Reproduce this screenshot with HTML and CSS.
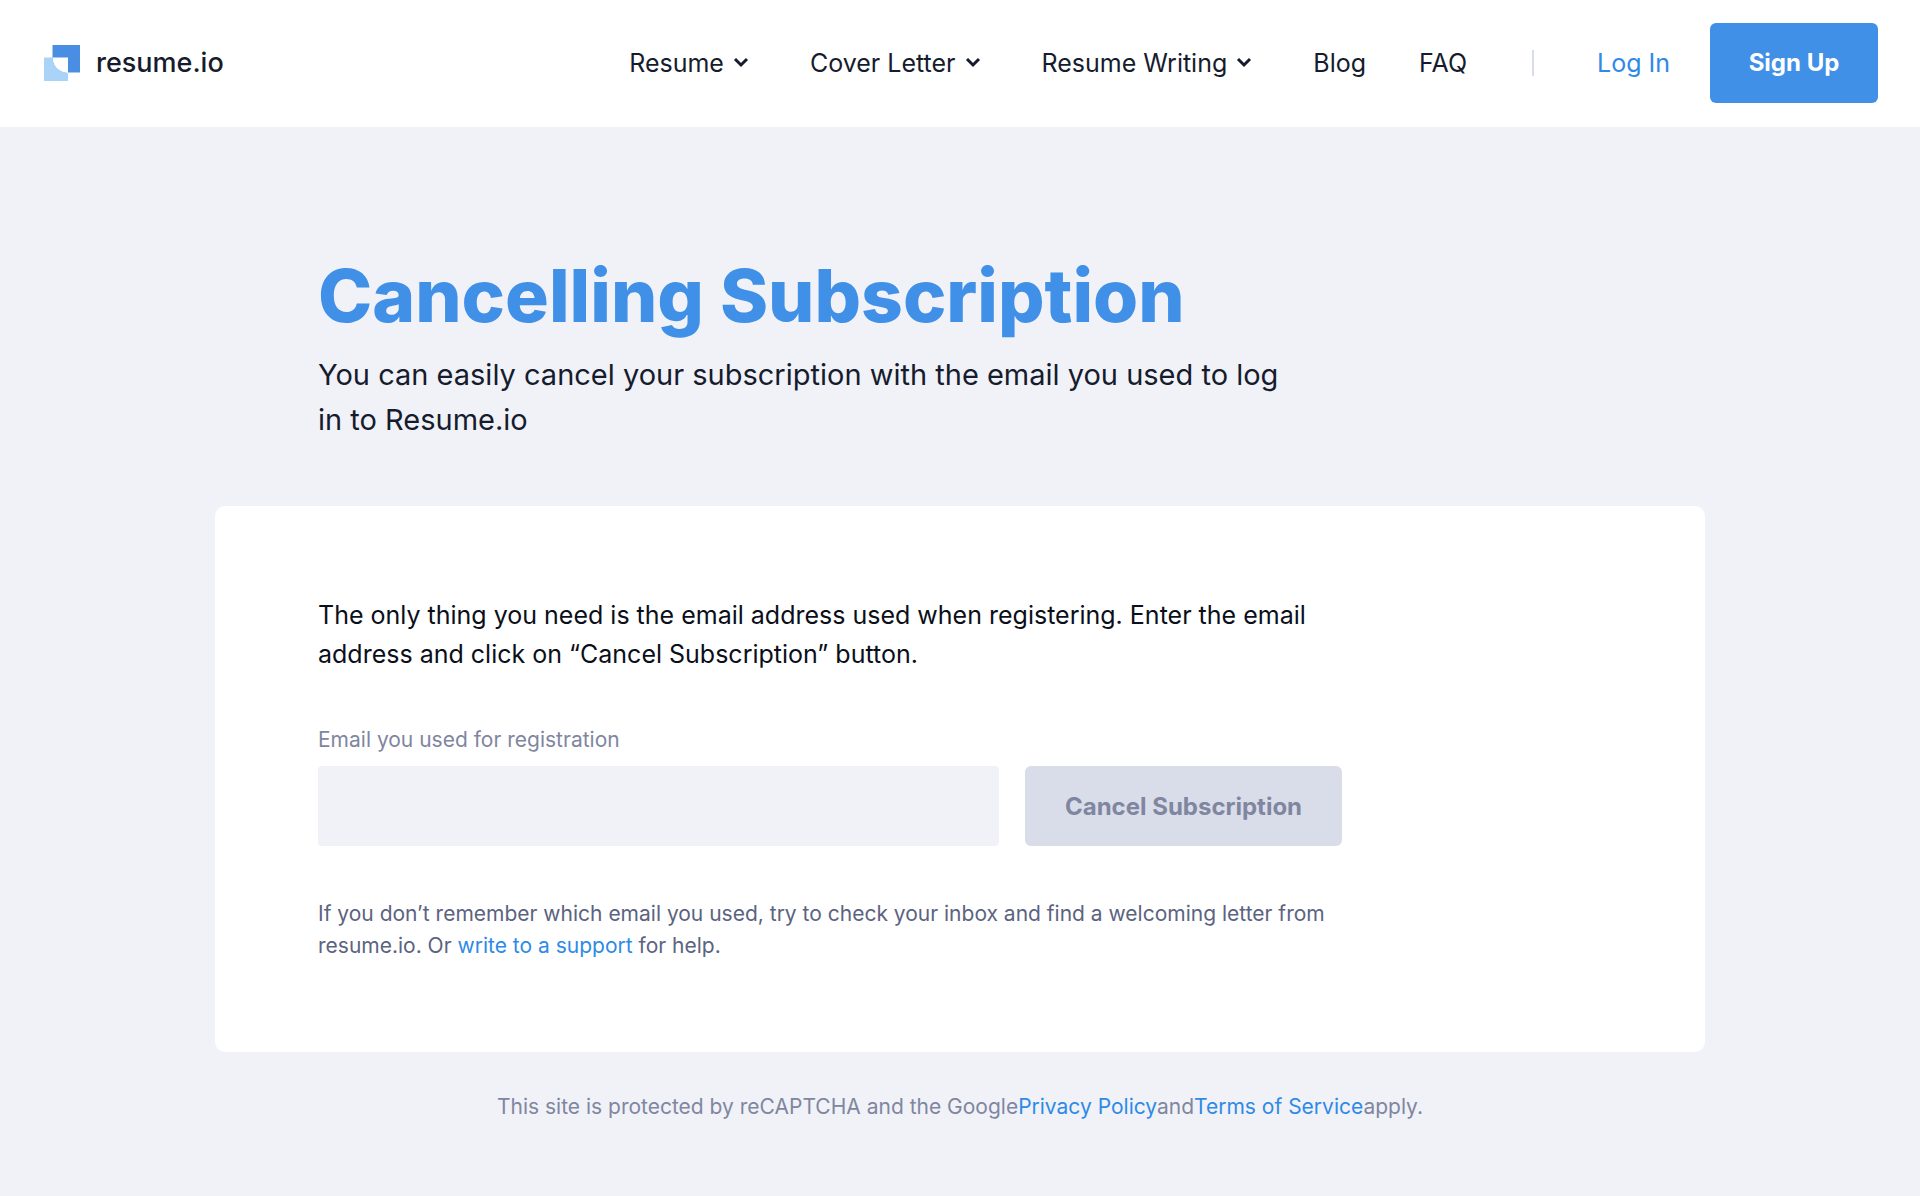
FILE: index.html
```html
<!DOCTYPE html>
<html lang="en">
<head>
  <meta charset="utf-8">
  <meta name="viewport" content="width=device-width, initial-scale=1">
  <title>Cancelling Subscription - Resume.io</title>
  <link rel="stylesheet" href="styles.css">
</head>
<body>

<header class="header">
  <a class="logo" href="#">
    <svg class="logo-icon" viewBox="0 0 36 36" aria-hidden="true">
      <path fill="#a9d3f7" d="M0 12.5h24V36H0z"/>
      <path fill="#4a8ee4" d="M8.500 0H36v27.500H8.500z"/>
      <path fill="#fff" d="M8.500 12.500H24v15.500C15 27.500 8.500 21.500 8.500 12.500z"/>
      <path fill="#a9d3f7" d="M8 12.500h.5C8.500 21.500 15 27.500 24 28v.5H8z"/>
    </svg>
    <span class="logo-text">resume.io</span>
  </a>

  <nav class="nav">
    <a class="nav-link" href="#">Resume
      <svg class="chevron" viewBox="0 0 16 11" aria-hidden="true"><path d="M2 2l6 6 6-6"/></svg>
    </a>
    <a class="nav-link" href="#">Cover Letter
      <svg class="chevron" viewBox="0 0 16 11" aria-hidden="true"><path d="M2 2l6 6 6-6"/></svg>
    </a>
    <a class="nav-link" href="#">Resume Writing
      <svg class="chevron" viewBox="0 0 16 11" aria-hidden="true"><path d="M2 2l6 6 6-6"/></svg>
    </a>
    <a class="nav-link" href="#">Blog</a>
    <a class="nav-link" href="#">FAQ</a>
  </nav>

  <div class="account">
    <a class="login" href="#">Log In</a>
    <button class="button button-primary" type="button">Sign Up</button>
  </div>
</header>

<main class="container">
  <div class="intro">
    <h1>Cancelling Subscription</h1>
    <p class="lead">You can easily cancel your subscription with the email you used to log in to Resume.io</p>
  </div>

  <div class="card">
    <p class="card-text">The only thing you need is the email address used when registering. Enter the email address and click on “Cancel Subscription” button.</p>

    <form class="form">
      <label for="email">Email you used for registration</label>
      <div class="form-row">
        <input id="email" type="email" name="email">
        <button class="button button-cancel" type="submit" disabled>Cancel Subscription</button>
      </div>
    </form>

    <p class="help">If you don’t remember which email you used, try to check your inbox and find a welcoming letter from resume.io. Or <a href="#">write to a support</a> for help.</p>
  </div>

  <p class="legal">This site is protected by reCAPTCHA and the Google<a href="#">Privacy Policy</a>and<a href="#">Terms of Service</a>apply.</p>
</main>

</body>
</html>
```
FILE: styles.css
```css
* {
  box-sizing: border-box;
}
body {
  margin: 0;
  font-family: Inter, 'Liberation Sans', sans-serif;
  background-color: #f0f2f8;
  color: #161c2d;
}
h1, p {
  margin: 0;
}
a {
  color: #2e8ae6;
  text-decoration: none;
}
.header {
  display: flex;
  align-items: center;
  min-height: 127px;
  padding: 22px 42px 24px 44px;
  background-color: #fff;
  font-size: 25px;
  line-height: 32px;
}
.logo {
  display: flex;
  align-items: center;
  gap: 16px;
  color: #161c2d;
}
.logo-icon {
  width: 36px;
  height: 36px;
}
.logo-text {
  font-size: 27px;
  font-weight: 500;
}
.nav {
  display: flex;
  gap: 53px;
  margin-left: auto;
}
.nav-link {
  display: flex;
  align-items: center;
  gap: 9px;
  color: #161c2d;
}
.chevron {
  width: 16px;
  height: 11px;
  margin-right: 8px;
  fill: none;
  stroke: #161c2d;
  stroke-width: 3;
}
.account {
  display: flex;
  align-items: center;
  margin-left: 65px;
}
.login {
  margin-right: 40px;
  padding-left: 65px;
  background: linear-gradient(#d9dcea, #d9dcea) left center / 2px 26px no-repeat;
}
.button {
  height: 80px;
  padding: 0 36px;
  border: none;
  border-radius: 6px;
  font-family: inherit;
  font-size: 24px;
  font-weight: 700;
  white-space: nowrap;
}
.button-primary {
  min-width: 168px;
  background-color: #4090e8;
  color: #fff;
  cursor: pointer;
}
.button-cancel {
  min-width: 317px;
  background-color: #d9dde9;
  color: #8086a0;
}
.container {
  max-width: 1490px;
  margin: 0 auto;
}
.intro {
  padding: 124px 103px 64px;
}
h1 {
  font-size: 73px;
  font-weight: 800;
  line-height: 90px;
  color: #4090e8;
}
.lead {
  max-width: 980px;
  margin-top: 11px;
  font-size: 29px;
  line-height: 45px;
}
.card {
  padding: 90px 103px;
  border-radius: 10px;
  background-color: #fff;
}
.card-text {
  max-width: 1024px;
  font-size: 25px;
  line-height: 39px;
  color: #0b0f1a;
}
.form {
  max-width: 1024px;
  margin-top: 50px;
}
.form label {
  display: block;
  font-size: 21px;
  line-height: 32px;
  color: #8086a0;
}
.form-row {
  display: flex;
  gap: 26px;
  margin-top: 10px;
}
.form input {
  flex: 1;
  min-width: 0;
  height: 80px;
  padding: 0 24px;
  border: none;
  border-radius: 4px;
  background-color: #f0f2f8;
  font-family: inherit;
  font-size: 25px;
}
.help {
  max-width: 1024px;
  margin-top: 52px;
  font-size: 21px;
  line-height: 32px;
  color: #5c6380;
}
.legal {
  padding: 39px 20px;
  font-size: 21px;
  line-height: 32px;
  text-align: center;
  color: #8086a0;
}
```
